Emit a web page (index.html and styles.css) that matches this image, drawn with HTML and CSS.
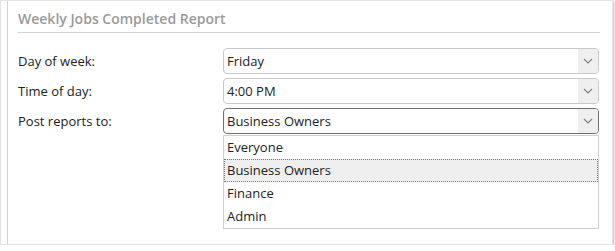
FILE: index.html
```html
<!DOCTYPE html>
<html lang="en">
<head>
    <meta charset="UTF-8">
    <title>Weekly Jobs Completed Report</title>
    <link rel="stylesheet" href="styles.css">
</head>
<body>
    <div class="frame">
        <div class="panel">
            <h2 class="title">Weekly Jobs Completed Report</h2>
            <div class="form">
                <label class="label">Day of week:</label>
                <div class="select">
                    <span class="value">Friday</span>
                    <span class="arrow"><svg width="10" height="6" viewBox="0 0 10 6"><path d="M1 1l4 4 4-4" fill="none" stroke="#808080" stroke-width="1.1"/></svg></span>
                </div>

                <label class="label">Time of day:</label>
                <div class="select">
                    <span class="value">4:00 PM</span>
                    <span class="arrow"><svg width="10" height="6" viewBox="0 0 10 6"><path d="M1 1l4 4 4-4" fill="none" stroke="#808080" stroke-width="1.1"/></svg></span>
                </div>

                <label class="label">Post reports to:</label>
                <div class="select-wrap">
                    <div class="select open">
                        <span class="value">Business Owners</span>
                        <span class="arrow"><svg width="10" height="6" viewBox="0 0 10 6"><path d="M1 1l4 4 4-4" fill="none" stroke="#808080" stroke-width="1.1"/></svg></span>
                    </div>
                    <ul class="options">
                        <li>Everyone</li>
                        <li class="active">Business Owners</li>
                        <li>Finance</li>
                        <li>Admin</li>
                    </ul>
                </div>
            </div>
        </div>
    </div>
</body>
</html>
```

FILE: styles.css
```css
body {
    margin: 0;
    padding: 0;
    background-color: #fff;
    font-family: "Open Sans", Arial, sans-serif;
    color: #222;
}

.frame {
    width: 611px;
    height: 243px;
    border: 1px solid #e4e4e4;
    box-shadow: 0 1px 3px rgba(0, 0, 0, 0.45);
    display: flex;
}

.panel {
    flex: 1;
    margin-left: 6px;
    border-left: 1px solid #d2d2d2;
    padding: 0 12px 0 10px;
}

.title {
    margin: 0;
    padding-top: 7px;
    height: 24px;
    font-size: 14px;
    font-weight: 600;
    line-height: 22px;
    color: #9a9a9a;
    border-bottom: 1px solid #d0d0d0;
}

.form {
    margin-top: 15px;
    display: grid;
    grid-template-columns: 205px 376px;
    row-gap: 4px;
    align-items: start;
}

.label {
    font-size: 13px;
    line-height: 26px;
    color: #222;
}

.select {
    height: 24px;
    border: 1px solid #c8c8c8;
    border-radius: 4px;
    display: flex;
    align-items: center;
    overflow: hidden;
    font-size: 13px;
}

.select.open {
    border-color: #6f6f6f;
}

.value {
    flex: 1;
    padding-left: 3px;
}

.arrow {
    width: 20px;
    height: 100%;
    background-color: #efefef;
    display: flex;
    align-items: center;
    justify-content: center;
}

.options {
    list-style: none;
    margin: 1px 0 0;
    padding: 0;
    border: 1px solid #cfcfcf;
    font-size: 13px;
}

.options li {
    height: 23px;
    line-height: 22px;
    padding-left: 3px;
}

.options li.active {
    background-color: #efefef;
    outline: 1px dotted #777;
    outline-offset: -1px;
}
```
